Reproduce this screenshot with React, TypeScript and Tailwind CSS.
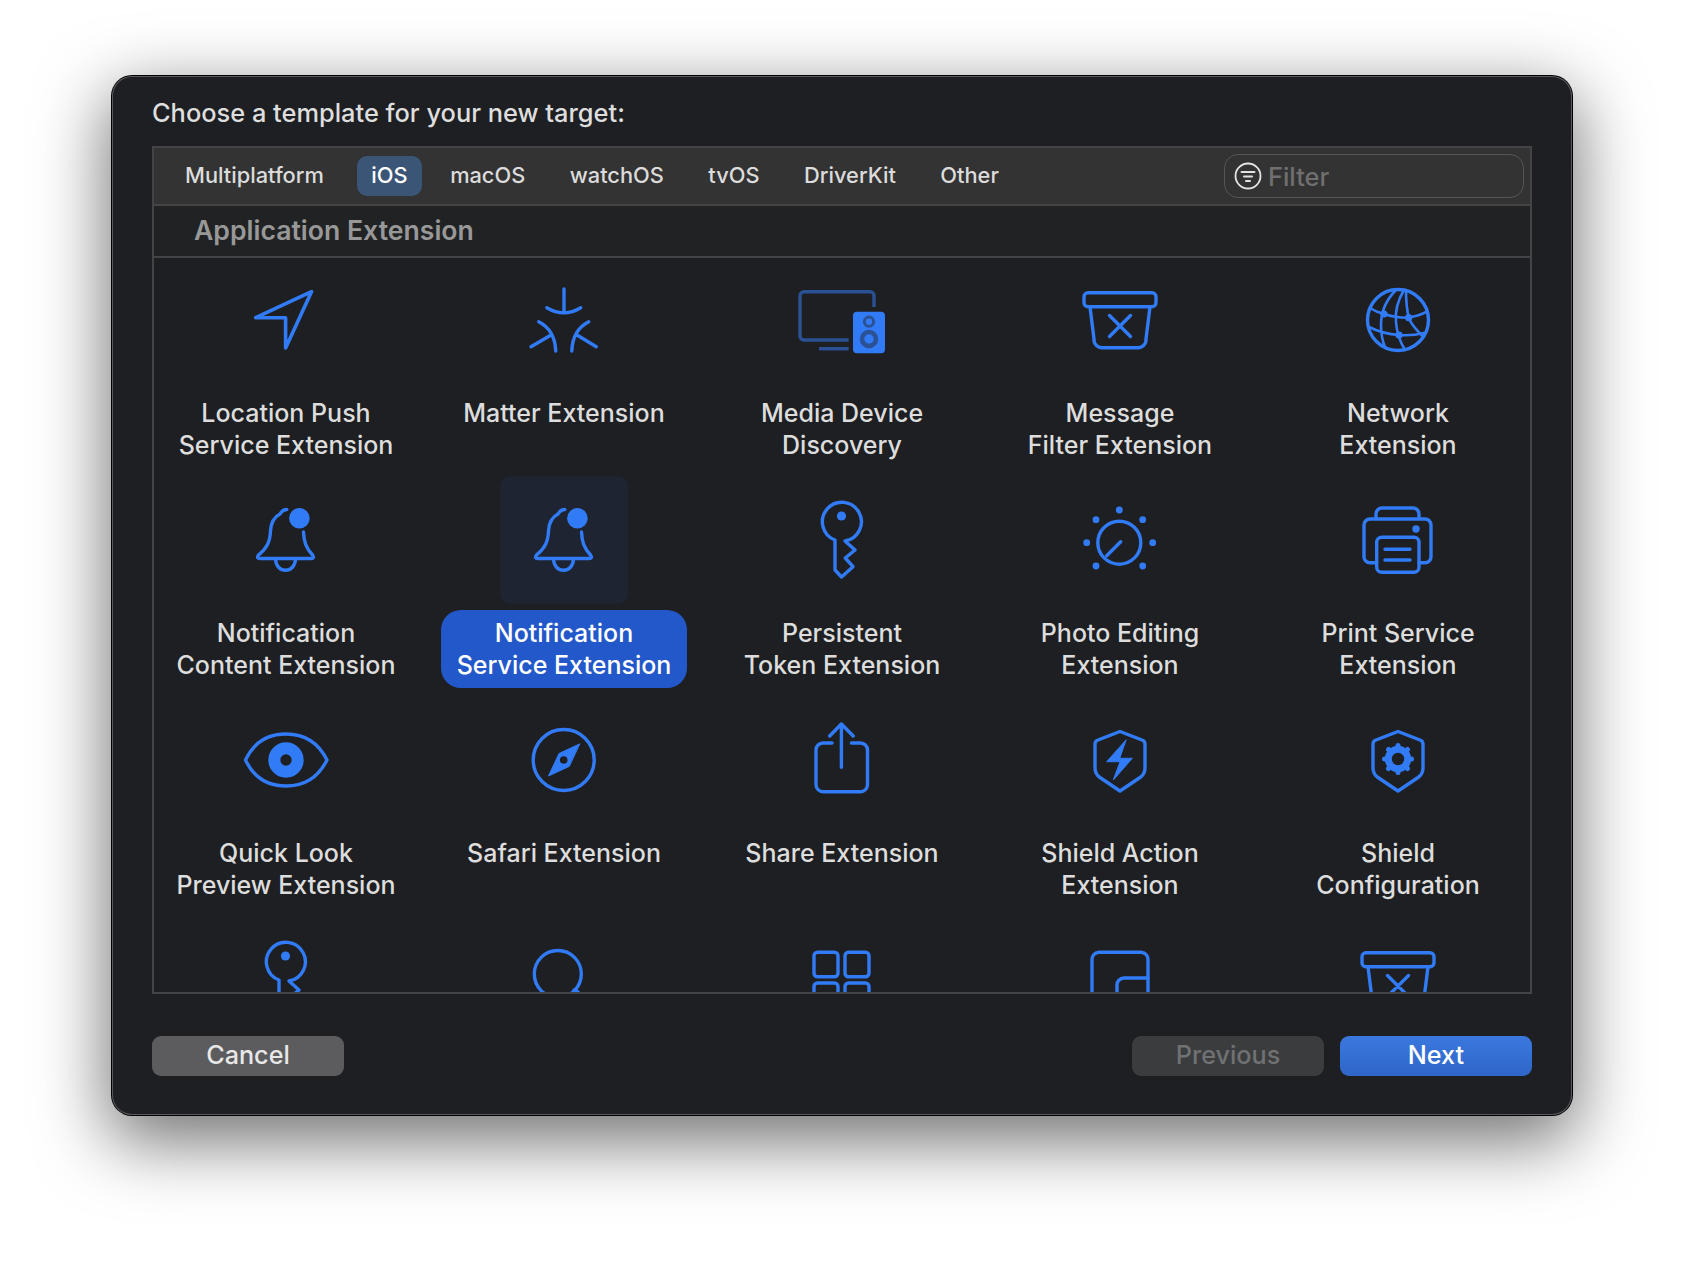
import React from "react";

const BLUE = "#317bf6";
const DARK = "#2b5194";
const BG = "#1e1f22";

function Svg({ children }: { children: React.ReactNode }) {
  return (
    <svg width="100" height="100" viewBox="0 0 100 100" fill="none" stroke={BLUE} strokeWidth="3.4" strokeLinecap="round" strokeLinejoin="round">
      {children}
    </svg>
  );
}

const Location = () => (
  <Svg>
    <path d="M75.5 21.7 L19.7 47.7 H49.6 V78 Z" strokeWidth="3.6" />
  </Svg>
);
const Matter = () => (
  <Svg>
    <path d="M50 19 V42.7 M32.8 37.7 Q50 48 66.7 37.7 M24.7 51.7 Q41 60 41.7 81 M17 76.7 L37 65 M74.75 51.7 Q58.5 60 57.8 81 M82.3 76.7 L63 65" />
  </Svg>
);
const Media = () => (
  <Svg>
    <path d="M56.6 70 H12 a4 4 0 0 1 -4 -4 V25.7 a4 4 0 0 1 4 -4 H78 a4 4 0 0 1 4 4 V37 M27 78.7 H56.6" stroke={DARK} strokeLinecap="butt" />
    <rect x="61" y="41.7" width="32" height="41.6" rx="4" fill={BLUE} stroke="none" />
    <circle cx="77" cy="51.7" r="4.6" stroke={DARK} strokeWidth="3" />
    <circle cx="77" cy="69" r="7" stroke={DARK} strokeWidth="4.5" />
  </Svg>
);
const MessageFilter = () => (
  <Svg>
    <rect x="14" y="22.7" width="72" height="14" rx="4" />
    <path d="M20 36.7 L24 69 a8 8 0 0 0 8 8.7 H68 a8 8 0 0 0 8 -8.7 L80 36.7 M39.5 45.5 L60.5 66.5 M60.5 45.5 L39.5 66.5" />
  </Svg>
);
const Network = () => (
  <Svg>
    <circle cx="50" cy="50" r="30.5" />
    <g strokeWidth="2.6">
      <path d="M48 20 C38 30 33 42 33 55 C33 63 34 70 37 77" />
      <path d="M56 20 C50 30 47 42 48 52 C48.5 60 51 70 57 80" />
      <path d="M58 20 C58 30 59 40 60.7 47.7 C63 55 69 60 75 67" />
      <path d="M22 38 Q28 42 36 44 Q48 48 60.7 47.7 Q71 46 79 41.7" />
      <path d="M21 57 Q35 64 51 65 Q64 66 76 63" />
    </g>
    <g fill={BLUE} stroke="none">
      <circle cx="36" cy="44" r="3.6" />
      <circle cx="60.7" cy="47.7" r="3.6" />
      <circle cx="51" cy="65" r="3.6" />
    </g>
  </Svg>
);
const Bell = () => (
  <Svg>
    <path d="M50.8 19.5 C46 19.5 45.5 22 44 24 C38 27 35 33 34.5 41 C34 52 31 58 22.5 65 Q20 68.5 24 68.5 H75 Q79 68.5 76.5 65 C70 58 68 52 67.5 42 M39.5 69 C40 84 59 84 59.5 69" />
    <circle cx="63.4" cy="28.3" r="10.3" fill={BLUE} stroke="none" />
  </Svg>
);
const Key = () => (
  <Svg>
    <path d="M43 50 A19.5 19.5 0 1 1 53 51 L63 60 L53.3 68 L61 76.7 L49.5 87 L43 80 Z" />
    <circle cx="49.5" cy="26" r="4.6" fill={BLUE} stroke="none" />
  </Svg>
);
const Photo = () => (
  <Svg>
    <circle cx="49.3" cy="52.7" r="21.5" />
    <path d="M36.7 65.7 L50.7 51.7" />
    <g fill={BLUE} stroke="none">
      <circle cx="49.3" cy="20" r="3.4" />
      <circle cx="26" cy="29.7" r="3.4" />
      <circle cx="72.7" cy="29.7" r="3.4" />
      <circle cx="16.7" cy="52.7" r="3.4" />
      <circle cx="82.7" cy="52.7" r="3.4" />
      <circle cx="26" cy="76" r="3.4" />
      <circle cx="72.7" cy="76" r="3.4" />
    </g>
  </Svg>
);
const Printer = () => (
  <Svg>
    <g transform="translate(-1 0)">
      <path d="M29.7 72.7 H23 a6 6 0 0 1 -6 -6 V35 a6 6 0 0 1 6 -6 H78 a6 6 0 0 1 6 6 V66.7 a6 6 0 0 1 -6 6 H72 M29 29 V24 a6 6 0 0 1 6 -6 H66 a6 6 0 0 1 6 6 V29 M38 59.3 H63 M38 70 H63" />
      <rect x="29.7" y="47.3" width="42.3" height="35" rx="5" />
      <circle cx="69" cy="39" r="3.7" fill={BLUE} stroke="none" />
    </g>
  </Svg>
);
const Eye = () => (
  <Svg>
    <path d="M9.5 50 C18 32 33 24 50 24 C67 24 82 32 91 50 C82 68 67 76 50 76 C33 76 18 68 9.5 50 Z" />
    <circle cx="50" cy="50" r="11.7" stroke={BLUE} strokeWidth="12" />
  </Svg>
);
const Compass = () => (
  <Svg>
    <circle cx="49.7" cy="50" r="30.5" />
    <path d="M65.5 34 L45 43.5 L34.5 66 L55 56.5 Z" fill={BLUE} strokeWidth="1" />
    <circle cx="49.7" cy="50" r="3.8" fill={BG} stroke="none" />
  </Svg>
);
const Share = () => (
  <Svg>
    <path d="M40 33 H31 a7 7 0 0 0 -7 7 V74.7 a7 7 0 0 0 7 7 H68.5 a7 7 0 0 0 7 -7 V40 a7 7 0 0 0 -7 -7 H59.4 M49.4 57.3 V14 M37.7 26 L49.4 14 L61.2 26" />
  </Svg>
);
const ShieldPath = () => (
  <path d="M50 21.5 L28 30 Q25 31 25 34 V58 Q25 64 30 67.5 L50 81 L70 67.5 Q75 64 75 58 V34 Q75 31 72 30 Z" />
);
const ShieldBolt = () => (
  <Svg>
    <ShieldPath />
    <path d="M56 30 L36.7 51.7 H50 L43.3 70 L62.3 48.3 H50 Z" fill={BLUE} strokeWidth="1" />
  </Svg>
);
const ShieldGear = () => (
  <Svg>
    <ShieldPath />
    <circle cx="50" cy="49" r="9.7" strokeWidth="7" />
    <path
      d="M50 35.5 V38 M50 60 V62.5 M36.5 49 H39 M61 49 H63.5 M40.5 39.5 L42.3 41.3 M57.7 56.7 L59.5 58.5 M59.5 39.5 L57.7 41.3 M42.3 56.7 L40.5 58.5"
      strokeWidth="5"
      strokeLinecap="round"
    />
  </Svg>
);
const Spotlight = () => (
  <Svg>
    <circle cx="43.8" cy="44" r="23.5" />
    <path d="M61 61 L80 80" strokeWidth="6" />
  </Svg>
);
const Widgets = () => (
  <Svg>
    <rect x="22" y="22.3" width="24" height="24.5" rx="3.5" />
    <rect x="53" y="22.3" width="24" height="24.5" rx="3.5" />
    <rect x="22" y="53" width="24" height="24.5" rx="3.5" />
    <rect x="53" y="53" width="24" height="24.5" rx="3.5" />
  </Svg>
);
const Widget = () => (
  <Svg>
    <rect x="22" y="22.3" width="56" height="56" rx="7" />
    <path d="M47 78 V55 a7 7 0 0 1 7 -7 H78" />
  </Svg>
);

type Item = { label: string; icon: React.FC; selected?: boolean };

const items: Item[] = [
  { label: "Location Push\nService Extension", icon: Location },
  { label: "Matter Extension", icon: Matter },
  { label: "Media Device\nDiscovery", icon: Media },
  { label: "Message\nFilter Extension", icon: MessageFilter },
  { label: "Network\nExtension", icon: Network },
  { label: "Notification\nContent Extension", icon: Bell },
  { label: "Notification\nService Extension", icon: Bell, selected: true },
  { label: "Persistent\nToken Extension", icon: Key },
  { label: "Photo Editing\nExtension", icon: Photo },
  { label: "Print Service\nExtension", icon: Printer },
  { label: "Quick Look\nPreview Extension", icon: Eye },
  { label: "Safari Extension", icon: Compass },
  { label: "Share Extension", icon: Share },
  { label: "Shield Action\nExtension", icon: ShieldBolt },
  { label: "Shield\nConfiguration", icon: ShieldGear },
  { label: "", icon: Key },
  { label: "", icon: Spotlight },
  { label: "", icon: Widgets },
  { label: "", icon: Widget },
  { label: "", icon: MessageFilter },
];

const tabs = ["Multiplatform", "iOS", "macOS", "watchOS", "tvOS", "DriverKit", "Other"];

function Cell({ item }: { item: Item }) {
  const Icon = item.icon;
  return (
    <div className="flex flex-col items-center h-[220px]">
      <div className={`w-[128px] h-[128px] shrink-0 rounded-[10px] flex items-center justify-center ${item.selected ? "bg-[#1e2431]" : ""}`}>
        <Icon />
      </div>
      {item.label && (
        <div
          className={`mt-[6px] px-[16px] py-[7px] whitespace-pre-line text-center text-[25px] leading-[32px] rounded-[20px] ${
            item.selected ? "bg-[#2358cb] text-white" : "text-[#dddddd]"
          }`}
        >
          {item.label}
        </div>
      )}
    </div>
  );
}

export default function App() {
  return (
    <div className="w-[1684px] h-[1264px] bg-white pt-[76px] pl-[112px] font-['Inter',sans-serif] font-[450] overflow-hidden">
      <div className="w-[1460px] h-[1039px] rounded-[20px] bg-[#1e1f22] px-[40px] pt-[21px] flex flex-col shadow-[inset_0_0_0_1px_#59595c,0_0_0_1px_#000,0_22px_70px_4px_rgba(0,0,0,0.56)]">
        <div className="h-[32px] leading-[32px] text-[25.4px] text-[#dedede] mb-[17px]">Choose a template for your new target:</div>

        <div className="h-[848px] border-2 border-[#444446] flex flex-col overflow-hidden">
          <div className="h-[58px] shrink-0 bg-[#333333] border-b-2 border-[#444446] flex items-center pl-[16px] pr-[6px]">
            <div className="flex gap-[14.5px] items-center">
              {tabs.map((t) => (
                <div
                  key={t}
                  className={`h-[40px] rounded-[10px] leading-[38px] text-[21.8px] ${
                    t === "iOS" ? "bg-[#3b5576] text-white px-[14px] ml-[4px] mr-[-1px]" : "text-[#dcdcdc] px-[15px]"
                  }`}
                >
                  {t}
                </div>
              ))}
            </div>
            <div className="ml-auto w-[300px] h-[44px] rounded-[14px] border border-[#555557] flex items-center pl-[9px] gap-[6px]">
              <svg width="28" height="28" viewBox="0 0 28 28" fill="none" stroke="#e4e4e4" strokeLinecap="round">
                <circle cx="14" cy="14" r="12.5" strokeWidth="1.8" />
                <path d="M7.5 10 H20.5" strokeWidth="2" />
                <path d="M10 14.5 H18" strokeWidth="2" />
                <path d="M12 19 H16" strokeWidth="2" />
              </svg>
              <span className="text-[25.4px] text-[#6f6f6f] mt-[2px]">Filter</span>
            </div>
          </div>

          <div className="h-[52px] shrink-0 bg-[#212224] border-b-2 border-[#444446] flex items-center pl-[40px]">
            <span className="text-[26.6px] font-semibold text-[#989898]">Application Extension</span>
          </div>

          <div className="flex-1 overflow-hidden">
            <div className="grid grid-cols-[repeat(5,278px)] justify-center -mt-[2px]">
              {items.map((item, i) => (
                <Cell key={i} item={item} />
              ))}
            </div>
          </div>
        </div>

        <div className="mt-[42px] flex text-[25.2px] leading-[37px]">
          <button className="w-[192px] h-[40px] rounded-[9px] bg-[#5c5c5e] text-[#e8e8e8] pb-[2px]">Cancel</button>
          <button className="ml-auto w-[192px] h-[40px] rounded-[9px] bg-[#3b3c3e] text-[#707172] pb-[2px]">Previous</button>
          <button className="ml-[16px] w-[192px] h-[40px] rounded-[9px] bg-gradient-to-b from-[#3a78de] to-[#2f66c8] text-white pb-[2px]">Next</button>
        </div>
      </div>
    </div>
  );
}
